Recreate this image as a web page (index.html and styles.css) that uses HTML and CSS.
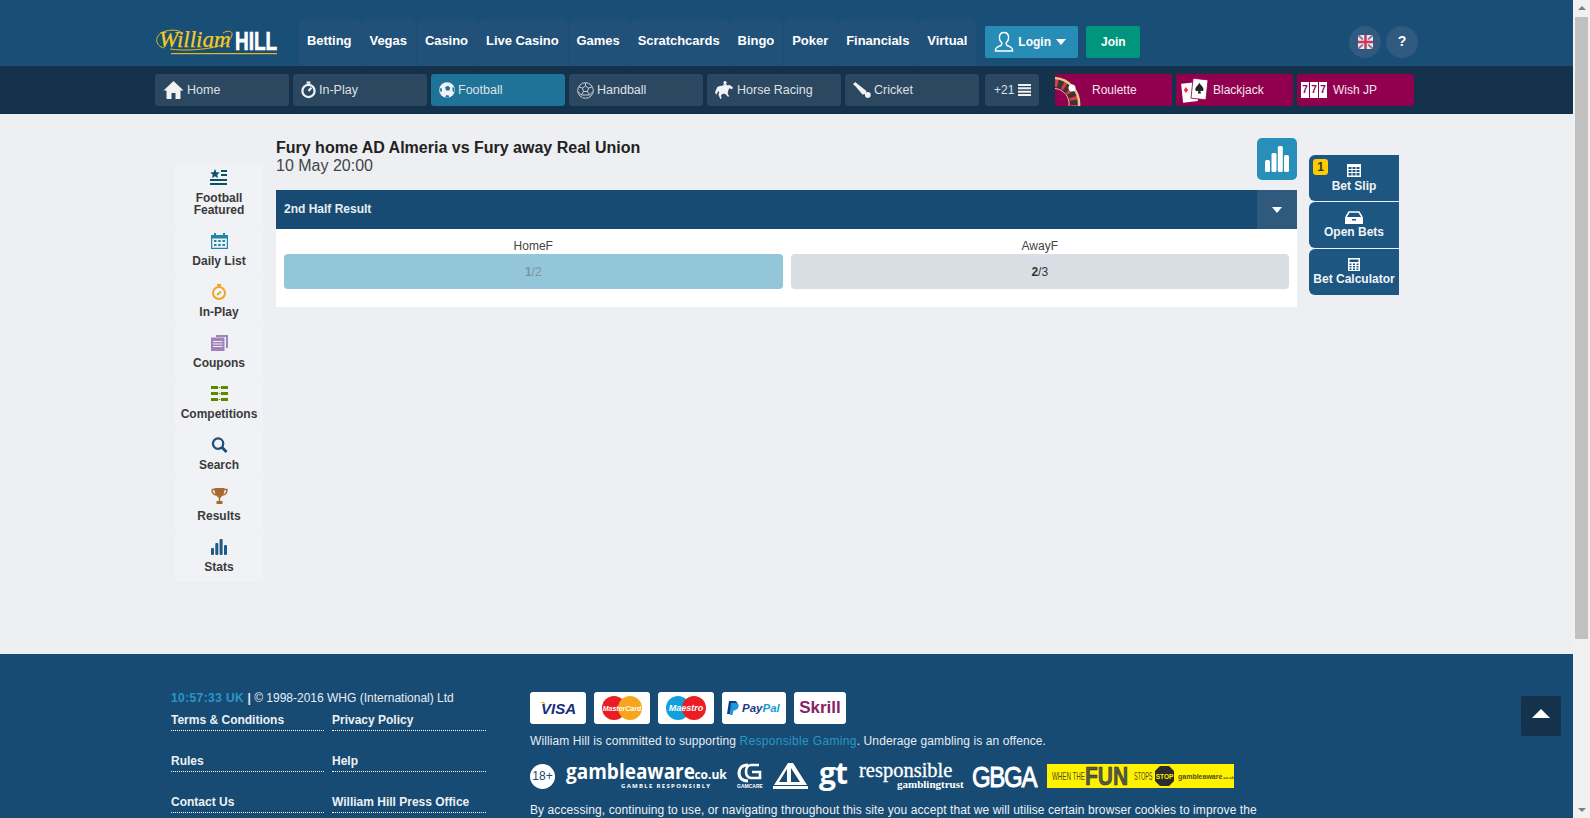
FILE: index.html
```html
<!DOCTYPE html>
<html lang="en">
<head>
    <meta charset="UTF-8">
    <meta name="viewport" content="width=device-width, initial-scale=1.0">
    <title>William Hill - Fury home AD Almeria vs Fury away Real Union</title>
    <link rel="stylesheet" href="styles.css">
</head>
<body>
<div class="window">
<div class="page">

    <!-- top header -->
    <header class="header">
        <div class="wrap header-row">
            <svg class="logo" width="122" height="26" viewBox="0 0 122 26">
                <path d="M9 19C0 17-1 7 8 3c8-3 14-2 18 0M68 4c5-3 10-2 9 2-1 5-6 9-13 11-14 4-36 5-49 3" fill="none" stroke="#e8bb1c" stroke-width="1"/>
                <text x="4" y="18" font-family="Liberation Serif" font-style="italic" font-size="23" fill="#f5cb1f" stroke="#f5cb1f" stroke-width=".25">William</text>
                <text transform="translate(80 21) scale(1 1.4)" font-family="Liberation Sans" font-weight="bold" font-size="19" fill="#fff" stroke="#fff" stroke-width=".5">HILL</text>
                <rect x="16" y="24" width="106" height="1.2" fill="#e8bb1c"/>
            </svg>
            <nav class="main-nav">
                <a class="tab">Betting</a>
                <a class="tab">Vegas</a>
                <a class="tab">Casino</a>
                <a class="tab">Live Casino</a>
                <a class="tab">Games</a>
                <a class="tab">Scratchcards</a>
                <a class="tab">Bingo</a>
                <a class="tab">Poker</a>
                <a class="tab">Financials</a>
                <a class="tab">Virtual</a>
            </nav>
            <a class="btn-login">
                <svg width="22" height="22" viewBox="0 0 22 22" fill="none" stroke="#fff" stroke-width="1.4"><path d="M11 1.500c-3 0-4.600 2.200-4.600 5 0 2.200 1 4 2.200 5 .4.400.3 2.200-.6 2.800-1.500 1-5.500 1.700-5.500 4.200v1.500h17v-1.500c0-2.500-4-3.200-5.500-4.200-.9-.6-1-2.400-.6-2.800 1.200-1 2.200-2.800 2.200-5 0-2.800-1.600-5-4.600-5z"/></svg>
                <span>Login</span>
                <i class="caret"></i>
            </a>
            <a class="btn-join">Join</a>
            <div class="round-btns">
                <a class="round">
                    <svg width="15" height="14" viewBox="0 0 15 14">
                        <rect width="15" height="14" fill="#e9e9f0"/>
                        <path d="M0 0l15 14M15 0L0 14" stroke="#8d6d98" stroke-width="2"/>
                        <path d="M7.500 0v14M0 7h15" stroke="#e9e9f0" stroke-width="4.500"/>
                        <path d="M7.500 0v14M0 7h15" stroke="#c93a55" stroke-width="2.500"/>
                    </svg>
                </a>
                <a class="round help">?</a>
            </div>
        </div>
    </header>

    <!-- sports bar -->
    <div class="subnav">
        <div class="wrap subnav-row">
            <a class="sport">
                <svg width="21" height="18" viewBox="0 0 20 18" fill="#f0f2f4"><path d="M10 0L0 9.500h3V18h5v-6h4v6h5V9.500h3z"/></svg>
                Home
            </a>
            <a class="sport">
                <svg width="15" height="18" viewBox="0 0 16 18" fill="none" stroke="#f0f2f4" stroke-width="2.400"><circle cx="8" cy="10" r="6.500"/><path d="M6 1.200h4M8 10l3-3.500"/></svg>
                In-Play
            </a>
            <a class="sport active">
                <svg width="16" height="18" viewBox="0 0 17 18"><circle cx="8.500" cy="9" r="8.300" fill="#f0f2f4"/><path d="M6.500 6l3-1.500 2.500 2-1 3H7.500zM.6 8l1.900-1.500.7 3-1 2.500zM7.500 14.500h2.500l1 2.500H6.500zM14 6l2 .5.400 4-1.600.5z" fill="#1f7399"/></svg>
                Football
            </a>
            <a class="sport">
                <svg width="17" height="17" viewBox="0 0 17 17" fill="none" stroke="#c9d0d7" stroke-width="1"><circle cx="8.500" cy="8.500" r="7.800"/><path d="M5.500 6l3-2 3 2-1 3.500h-4zM5.500 6L2 5M11.500 6L15 5M8.500 4V1M6.500 9.500L4.500 13M10.500 9.500l2 3.500M4.500 13h8M1 9.500l3.500 3.500M16 9.500L12.500 13"/></svg>
                Handball
            </a>
            <a class="sport">
                <svg width="19" height="19" viewBox="0 0 18 18" fill="#f0f2f4"><circle cx="9.500" cy="1.500" r="1.500"/><path d="M8 3h3l1 1.500 1.500-1 3.500 2.500-.8 1.800-2.700-1-1 2.500-.5 2.700 1.500 2.500-1.200.5-2.800-3-2 0-1.800 1.500.5 3-1.200.5L3.300 13l.7-2-.8-1.500L1.200 13 0 11l2-5c1.500-1.500 4-1.500 5.500-1.500z"/></svg>
                Horse Racing
            </a>
            <a class="sport">
                <svg width="18" height="18" viewBox="0 0 20 18" fill="#f0f2f4"><path d="M0 2.500L2.500 0l3 2.500 9.500 7.500-1 3.500-3.500.5L3 5z"/><circle cx="16.500" cy="14.500" r="3.200"/></svg>
                Cricket
            </a>
            <a class="sport more">
                +21
                <svg width="13" height="12" viewBox="0 0 13 12" fill="#f0f2f4"><path d="M0 0h13v2H0zM0 3.300h13v2H0zM0 6.700h13v2H0zM0 10h13v2H0z"/></svg>
            </a>
            <div class="games">
                <a class="game">
                    <svg class="game-pic" width="27" height="32" viewBox="0 0 27 32" fill="none">
                        <path d="M0 9A21 21 0 0 1 19 32" stroke="#3b3335" stroke-width="8"/>
                        <path d="M0 9A21 21 0 0 1 19 32" stroke="#d8404a" stroke-width="8" stroke-dasharray="3 5"/>
                        <path d="M0 4A26 26 0 0 1 24 32" stroke="#e8c988" stroke-width="2.500"/>
                        <path d="M0 14.500A15.500 15.500 0 0 1 14 32" stroke="#e8c988" stroke-width="1"/>
                        <circle cx="17" cy="14" r="3.500" fill="#fff"/>
                    </svg>
                    <span class="roulette-label">Roulette</span>
                </a>
                <a class="game">
                    <svg class="cards" width="28" height="26" viewBox="0 0 28 26">
                        <rect x="1" y="6" width="15" height="19" fill="#fff" transform="rotate(-6 8 15)"/>
                        <path d="M5 10l2.200 3-2.200 3-2.200-3z" fill="#e33"/>
                        <rect x="11" y="2" width="15" height="20" fill="#fff" transform="rotate(6 18 12)" stroke="#90004e" stroke-width=".8"/>
                        <path d="M18.500 6c1.500 2.500 4 4 4 6.500 0 1.500-2 2.200-3.200 1l.7 3h-3.200l.7-3c-1.200 1.200-3.200.5-3.200-1 0-2.500 2.700-4 4-6.500z" fill="#222"/>
                    </svg>
                    Blackjack
                </a>
                <a class="game">
                    <span class="sevens"><b>7</b><b>7</b><b>7</b></span>
                    Wish JP
                </a>
            </div>
        </div>
    </div>

    <!-- event page -->
    <div class="content">
        <div class="wrap content-row">
            <ul class="side-nav">
                <li class="side-item first">
                    <svg width="18" height="16" viewBox="0 0 18 16" fill="#0e5068"><path d="M5 0l1.400 3.200 3.400.3-2.600 2.200.8 3.300L5 7.300 2 9l.8-3.300L.2 3.500l3.400-.3zM11 1h6v2h-6zM11 5h6v2h-6zM0 10h17v2H0zM0 14h17v2H0z"/></svg>
                    <span>Football<br>Featured</span>
                </li>
                <li class="side-item">
                    <svg width="17" height="16" viewBox="0 0 17 16"><path d="M0 2h17v14H0z" fill="#2087a8"/><path d="M1.200 5.500h14.600v9.300H1.200z" fill="#edeff3"/><path d="M3 0h2v4H3zM12 0h2v4h-2zM3 7h2.500v2H3zM7.200 7h2.500v2H7.200zM11.500 7H14v2h-2.500zM3 11h2.500v2H3zM7.200 11h2.500v2H7.200zM11.500 11H14v2h-2.500z" fill="#2087a8"/></svg>
                    <span>Daily List</span>
                </li>
                <li class="side-item">
                    <svg width="16" height="16" viewBox="0 0 16 16" fill="none" stroke="#eba726" stroke-width="2"><circle cx="8" cy="9" r="6"/><path d="M6 1h4M6 11l4-3.500"/></svg>
                    <span>In-Play</span>
                </li>
                <li class="side-item">
                    <svg width="17" height="16" viewBox="0 0 17 16"><path d="M5 0h12v13h-2V2H5z" fill="#a083b8"/><path d="M0 2.500h13.500V16H0z" fill="#a083b8"/><path d="M2 6h9.500v1H2zM2 8.500h9.500v1H2zM2 11h9.500v1H2z" fill="#edeff3"/></svg>
                    <span>Coupons</span>
                </li>
                <li class="side-item">
                    <svg width="17" height="16" viewBox="0 0 17 16" fill="#5b8a00"><path d="M0 0h7v3H0zM0 6h7v3H0zM0 12h7v3H0zM10 0h7v3h-7zM10 6h7v3h-7zM10 12h7v3h-7zM7.800 1h1.500v1H7.800zM7.800 7h1.500v1H7.800zM7.800 13h1.500v1H7.800z"/></svg>
                    <span>Competitions</span>
                </li>
                <li class="side-item">
                    <svg width="17" height="17" viewBox="0 0 17 17" fill="none" stroke="#1b4d78"><circle cx="7" cy="7" r="5.500" stroke-width="2.400"/><path d="M11 11l5 5" stroke-width="3"/></svg>
                    <span>Search</span>
                </li>
                <li class="side-item">
                    <svg width="17" height="16" viewBox="0 0 17 16"><path d="M1 1.500h15c0 3.500-1.500 5-4 5.500M1 1.500c0 3.500 1.500 5 4 5.500" fill="none" stroke="#a9682d" stroke-width="1.400"/><path d="M3.500 0h10c0 5-1 7.500-3.500 9-.5.400-.8 1-.8 2v2H11.500v3h-6v-3h2.300v-2c0-1-.3-1.600-.8-2C4.500 7.500 3.500 5 3.500 0z" fill="#a9682d"/></svg>
                    <span>Results</span>
                </li>
                <li class="side-item last">
                    <svg width="16" height="16" viewBox="0 0 16 16" fill="#1f5a85"><rect x="0" y="9" width="3" height="7" rx="1"/><rect x="4.300" y="4" width="3" height="12" rx="1"/><rect x="8.600" y="0" width="3" height="16" rx="1"/><rect x="13" y="6" width="3" height="10" rx="1"/></svg>
                    <span>Stats</span>
                </li>
            </ul>

            <main class="event">
                <div class="event-head">
                    <div>
                        <h1 class="event-title">Fury home AD Almeria vs Fury away Real Union</h1>
                        <div class="event-date">10 May 20:00</div>
                    </div>
                    <a class="stats-btn">
                        <svg width="24" height="26" viewBox="0 0 24 26" fill="#fff"><rect x="0" y="14" width="5" height="12" rx="1.500"/><rect x="6.500" y="7" width="5" height="19" rx="1.500"/><rect x="12.800" y="0" width="5" height="26" rx="1.500"/><rect x="19" y="9" width="5" height="17" rx="1.500"/></svg>
                    </a>
                </div>
                <section class="market">
                    <div class="market-head">
                        <span class="market-name">2nd Half Result</span>
                        <a class="market-toggle"><i class="caret"></i></a>
                    </div>
                    <div class="market-body">
                        <div class="outcome">
                            <div class="outcome-name">HomeF</div>
                            <a class="odds selected"><b>1</b>/2</a>
                        </div>
                        <div class="outcome">
                            <div class="outcome-name">AwayF</div>
                            <a class="odds"><b>2</b>/3</a>
                        </div>
                    </div>
                </section>
            </main>

            <div class="bet-tabs">
                <a class="bet-tab">
                    <i class="badge">1</i>
                    <svg width="14" height="13" viewBox="0 0 14 13" fill="#fff"><path d="M0 0h14v13H0zM1.500 3v2h3V3zM5.500 3v2h3V3zM9.500 3v2h3V3zM1.500 6v2h3V6zM5.500 6v2h3V6zM9.500 6v2h3V6zM1.500 9v2.500h3V9zM5.500 9v2.500h3V9zM9.500 9v2.500h3V9z" fill-rule="evenodd"/></svg>
                    Bet Slip
                </a>
                <a class="bet-tab">
                    <svg width="18" height="13" viewBox="0 0 18 13" fill="none" stroke="#fff"><path d="M1 6l3-5h10l3 5" stroke-width="1.500"/><path d="M0 6h18v7H0z" fill="#fff" stroke="none"/><path d="M7 8h4v1.500H7z" fill="#1d5681" stroke="none"/></svg>
                    Open Bets
                </a>
                <a class="bet-tab">
                    <svg width="12" height="13" viewBox="0 0 12 13" fill="#fff"><path d="M0 0h12v13H0zM1.500 1.500v2.500h9V1.500zM1.500 5.500V7h2V5.500zM5 5.500V7h2V5.500zM8.500 5.500V7h2V5.500zM1.500 8V9.500h2V8zM5 8V9.500h2V8zM8.500 8V9.500h2V8zM1.500 10.500V12h2v-1.500zM5 10.500V12h2v-1.500zM8.500 10.500V12h2v-1.500z" fill-rule="evenodd"/></svg>
                    Bet Calculator
                </a>
            </div>
        </div>
    </div>

    <!-- footer -->
    <footer class="footer">
        <div class="wrap footer-row">
            <div class="foot-left">
                <div class="copyright"><span class="clock">10:57:33 UK</span> <b>|</b> © 1998-2016 WHG (International) Ltd</div>
                <div class="foot-links">
                    <a>Terms &amp; Conditions</a>
                    <a>Privacy Policy</a>
                    <a>Rules</a>
                    <a>Help</a>
                    <a>Contact Us</a>
                    <a>William Hill Press Office</a>
                </div>
            </div>
            <div class="foot-right">
                <div class="pay-row">
                    <span class="pay">
                        <svg width="40" height="16" viewBox="0 0 40 16"><path d="M0 2c3 0 6 1 8 4L6 2z" fill="#f2a91e"/><text x="3" y="14" font-family="Liberation Sans" font-weight="bold" font-style="italic" font-size="15" fill="#1a2a80">VISA</text></svg>
                    </span>
                    <span class="pay">
                        <svg width="40" height="24" viewBox="0 0 40 24"><circle cx="12" cy="12" r="12" fill="#ea1c24"/><circle cx="28" cy="12" r="12" fill="#f7a51c"/><text x="20" y="14.500" text-anchor="middle" font-family="Liberation Sans" font-weight="bold" font-style="italic" font-size="7" fill="#fff">MasterCard</text></svg>
                    </span>
                    <span class="pay">
                        <svg width="40" height="24" viewBox="0 0 40 24"><circle cx="12" cy="12" r="12" fill="#129fdb"/><circle cx="28" cy="12" r="12" fill="#ea1c24"/><text x="20" y="15" text-anchor="middle" font-family="Liberation Sans" font-weight="bold" font-style="italic" font-size="9" fill="#fff">Maestro</text></svg>
                    </span>
                    <span class="pay wide">
                        <svg width="54" height="16" viewBox="0 0 54 16"><path d="M2 1h5c3 0 4 2 3 4.500S7 9 5 9H4l-1 5H0z" fill="#143a8a"/><path d="M4 3h5c2.500 0 3 2 2.500 4s-3 3.500-5 3.500l-1 4.500H3z" fill="#1b9ad6"/><text x="15" y="12" font-family="Liberation Sans" font-weight="bold" font-style="italic" font-size="11.500"><tspan fill="#1a3a86">Pay</tspan><tspan fill="#1b9ad6">Pal</tspan></text></svg>
                    </span>
                    <span class="pay narrow skrill">Skrill</span>
                </div>
                <p class="commit">William Hill is committed to supporting <a>Responsible Gaming</a>. Underage gambling is an offence.</p>
                <div class="trust-row">
                    <span class="age">18+</span>
                    <svg width="160" height="26" viewBox="0 0 160 26" fill="#fff" font-family="Open Sans" font-weight="bold">
                        <text transform="translate(0 16) scale(1 1.1)" font-size="19">gambleaware</text>
                        <text x="125" y="16" font-size="12">.co.uk</text>
                        <text x="55" y="25" font-size="6" letter-spacing="1.300">GAMBLE RESPONSIBLY</text>
                    </svg>
                    <svg width="25" height="26" viewBox="0 0 25 26" fill="none" stroke="#fff">
                        <path d="M11 2C5 2 2 5.500 2 10s3 8 9 8" stroke-width="3.200"/>
                        <path d="M22 2h-8c-3 0-5 3-5 7 0 3 2 6 5 6h9v-6h-8" stroke-width="2.600"/>
                        <text x="0" y="25" font-family="Liberation Sans" font-size="5" font-weight="bold" fill="#fff" stroke="none">GAMCARE</text>
                    </svg>
                    <svg width="35" height="26" viewBox="0 0 35 26" fill="#fff">
                        <path d="M15 0h5l14 22H1zM14 6L6 19h8zM18 5v14h9z" fill-rule="evenodd"/>
                        <rect y="23" width="35" height="3"/>
                    </svg>
                    <span class="gt">gt</span>
                    <svg width="102" height="26" viewBox="0 0 102 26" fill="#fff" font-family="Liberation Serif">
                        <text x="0" y="14" font-size="20.500" stroke="#fff" stroke-width=".3">responsible</text>
                        <text x="38" y="25" font-size="11" font-weight="bold">gamblingtrust</text>
                    </svg>
                    <svg width="64" height="26" viewBox="0 0 64 26" fill="#fff">
                        <text transform="translate(0 24) scale(1 1.25)" font-family="Liberation Sans" font-size="24" letter-spacing="-1.300" stroke="#fff" stroke-width=".8">GBGA</text>
                    </svg>
                    <svg class="fun" width="187" height="24" viewBox="0 0 187 24">
                        <rect width="187" height="24" fill="#fff200"/>
                        <g font-family="Liberation Sans" fill="#4d4d20">
                            <text transform="translate(5 16) scale(1 1.7)" font-size="6.200">WHEN THE</text>
                            <text transform="translate(38 21) scale(1 1.2)" font-size="21" font-weight="bold" fill="#58584a" stroke="#333" stroke-width=".5">FUN</text>
                            <text transform="translate(87 16) scale(1 1.9)" font-size="5.500">STOPS</text>
                        </g>
                        <path d="M113 2h9l5 5v10l-5 5h-9l-5-5V7z" fill="#2b2b2b"/>
                        <text x="117.500" y="14.500" text-anchor="middle" font-family="Liberation Sans" font-weight="bold" font-size="6.500" fill="#fff200">STOP</text>
                        <text x="131" y="15" font-family="Liberation Sans" font-weight="bold" font-size="7" fill="#4d4d20">gambleaware<tspan font-size="4">.co.uk</tspan></text>
                    </svg>
                </div>
                <p class="cookies">By accessing, continuing to use, or navigating throughout this site you accept that we will utilise certain browser cookies to improve the experience which you receive with us. William Hill brands use some cookies which interfere with your browser and what cookies which will</p>
            </div>
        </div>
    </footer>

    <a class="to-top"><i></i></a>
</div>

<!-- the page is longer than the window -->
<div class="scrollbar">
    <i class="arrow-up"></i>
    <div class="thumb"></div>
    <i class="arrow-down"></i>
</div>
</div>
</body>
</html>
```

FILE: styles.css
```css
* {
 box-sizing: border-box;
}

body {
 margin: 0;
 font-family: "Liberation Sans", Arial, sans-serif;
 font-size: 12px;
 color: #333;
 background-color: #edeff3;
}

a {
 color: inherit;
 text-decoration: none;
}

.window {
 display: flex;
 height: 818px;
 overflow: hidden;
}

.page {
 position: relative;
 flex: 1;
 min-width: 0;
 height: 818px;
 overflow: hidden;
}

.wrap {
 width: 1263px;
 margin: 0 auto;
}

/* header */
.header {
 height: 66px;
 background-color: #194e76;
}

.header-row {
 display: flex;
 align-items: flex-end;
 height: 66px;
}

.logo {
 flex: none;
 margin-bottom: 11px;
 overflow: visible;
}

.main-nav {
 display: flex;
 margin-left: 21px;
}

.tab {
 height: 47px;
 padding: 0 9px;
 border-radius: 6px 6px 0 0;
 background-color: #215179;
 box-shadow: inset 1px 0 0 #1c4f77;
 color: #fff;
 font-size: 13px;
 font-weight: bold;
 letter-spacing: -.04px;
 line-height: 44px;
}

.btn-login,
.btn-join {
 display: flex;
 align-items: center;
 height: 32px;
 margin: 0 0 8px 8px;
 border-radius: 2px;
 color: #fff;
 font-size: 12px;
 font-weight: bold;
}

.btn-login {
 width: 93px;
 margin-left: 9px;
 padding-left: 8px;
 background-color: #278db6;
}

.btn-login span {
 margin-left: 3px;
}

.btn-login .caret {
 margin-left: 5px;
}

.btn-join {
 justify-content: center;
 width: 54px;
 background-color: #00957d;
}

.caret {
 display: inline-block;
 width: 0;
 height: 0;
 border-left: 5px solid transparent;
 border-right: 5px solid transparent;
 border-top: 6px solid #fff;
}

.round-btns {
 display: flex;
 gap: 5px;
 margin: 0 0 8px auto;
}

.round {
 display: flex;
 align-items: center;
 justify-content: center;
 width: 32px;
 height: 32px;
 border-radius: 50%;
 background-color: #305a7f;
}

.help {
 color: #fff;
 font-size: 14px;
 font-weight: bold;
 padding-bottom: 3px;
}

/* sports bar */
.subnav {
 height: 48px;
 padding-top: 8px;
 background-color: #14324c;
}

.subnav-row {
 display: flex;
 gap: 4px;
}

.sport {
 display: flex;
 align-items: center;
 gap: 3px;
 width: 134px;
 height: 32px;
 padding-left: 8px;
 border-radius: 3px;
 background-color: #2c4760;
 color: #dde1e6;
 font-size: 12.5px;
}

.sport.active {
 background-color: #1f7399;
}

.sport.more {
 gap: 4px;
 width: 54px;
 margin-left: 2px;
 padding-left: 9px;
 font-size: 12px;
}

.games {
 display: flex;
 gap: 4px;
 margin-left: 12px;
}

.game {
 position: relative;
 display: flex;
 align-items: center;
 gap: 4px;
 width: 117px;
 height: 32px;
 padding-left: 5px;
 border-radius: 3px;
 background-color: #90004e;
 color: #f4e6ee;
 font-size: 12px;
 overflow: hidden;
}

.game-pic {
 position: absolute;
 left: 0;
 top: 0;
}

.roulette-label {
 margin-left: 32px;
}

.sevens {
 display: flex;
 gap: 1px;
 margin-left: -1px;
 margin-right: 2px;
}

.sevens b {
 width: 8px;
 height: 16px;
 background-color: #fff;
 color: #90004e;
 font-size: 10px;
 line-height: 16px;
 text-align: center;
}

/* content */
.content {
 height: 540px;
}

.content-row {
 display: flex;
 align-items: flex-start;
}

.side-nav {
 width: 88px;
 margin: 49px 0 0 20px;
 padding: 0;
 list-style: none;
}

.side-item {
 display: flex;
 flex-direction: column;
 align-items: center;
 height: 51px;
 padding-top: 8px;
 border-bottom: 1px solid #edeff3;
 background-color: #f0f2f5;
 color: #3a3a3a;
 font-size: 12px;
 font-weight: bold;
 line-height: 12px;
 text-align: center;
}

.side-item.first {
 height: 62px;
 padding-top: 6px;
}

.side-item.first svg {
 margin-bottom: 7px;
}

.side-item.last {
 border-bottom: 0;
}

.side-item svg {
 flex: none;
 height: 16px;
 margin-bottom: 6px;
}

.event {
 width: 1021px;
 margin: 24px 0 0 13px;
}

.event-head {
 display: flex;
 justify-content: space-between;
 height: 52px;
}

.event-title {
 margin: 0;
 color: #222;
 font-size: 16px;
 line-height: 19px;
}

.event-date {
 color: #444;
 font-size: 16px;
 line-height: 18px;
}

.stats-btn {
 display: flex;
 align-items: center;
 justify-content: center;
 width: 40px;
 height: 42px;
 border-radius: 5px;
 background-color: #278fb9;
}

.market {
 background-color: #fff;
}

.market-head {
 display: flex;
 align-items: center;
 justify-content: space-between;
 height: 39px;
 padding-left: 8px;
 background-color: #174b73;
 color: #e8edf2;
 font-weight: bold;
}

.market-name {
 padding-bottom: 2px;
}

.market-toggle {
 display: flex;
 align-items: center;
 justify-content: center;
 width: 40px;
 height: 39px;
 background-color: #2f5a7e;
}

.market-body {
 display: flex;
 gap: 8px;
 padding: 8px 8px 18px;
}

.outcome {
 flex: 1;
}

.outcome-name {
 padding-top: 1px;
 color: #444;
 line-height: 16px;
 text-align: center;
}

.odds {
 display: block;
 height: 35px;
 border-radius: 4px;
 background-color: #d9dee5;
 color: #333;
 line-height: 37px;
 text-align: center;
}

.odds.selected {
 background-color: #93c6d9;
 color: #81929c;
}

.bet-tabs {
 width: 90px;
 margin: 41px 0 0 12px;
}

.bet-tab {
 position: relative;
 display: flex;
 flex-direction: column;
 align-items: center;
 height: 46px;
 margin-bottom: 1px;
 padding-top: 9px;
 border-radius: 6px 0 0 6px;
 background-color: #1d5681;
 color: #f1f4f7;
 font-weight: bold;
 line-height: 15px;
}

.bet-tab svg {
 margin-bottom: 2px;
}

.bet-tab + .bet-tab svg {
 margin-bottom: 1px;
}

.badge {
 position: absolute;
 left: 4px;
 top: 4px;
 width: 15px;
 height: 16px;
 border-radius: 3px;
 background-color: #fc0;
 color: #333;
 font-style: normal;
 line-height: 16px;
 text-align: center;
}

/* footer */
.footer {
 height: 300px;
 background-color: #174b73;
 color: #fff;
}

.footer-row {
 display: flex;
}

.foot-left {
 width: 375px;
 padding: 37px 0 0 16px;
}

.copyright {
 line-height: 14px;
 color: #e8edf2;
}

.clock {
 color: #2b96c4;
 font-weight: bold;
 letter-spacing: .4px;
}

.foot-links {
 display: grid;
 grid-template-columns: 153px 154px;
 column-gap: 8px;
 row-gap: 22px;
 margin-top: 7px;
}

.foot-links a {
 height: 19px;
 border-bottom: 1px dotted #fff;
 color: #eef1f4;
 font-weight: bold;
 line-height: 17px;
}

.foot-right {
 width: 730px;
 padding-top: 38px;
}

.pay-row {
 display: flex;
 gap: 8px;
}

.pay {
 display: flex;
 align-items: center;
 justify-content: center;
 width: 56px;
 height: 32px;
 border-radius: 3px;
 background-color: #fff;
}

.pay.wide {
 width: 64px;
}

.pay.narrow {
 width: 52px;
}

.skrill {
 color: #862165;
 font-size: 17px;
 font-weight: bold;
}

.commit {
 margin: 10px 0 0;
 color: #e8edf2;
 letter-spacing: .1px;
 line-height: 14px;
}

.commit a {
 color: #2b96c4;
 letter-spacing: .33px;
}

.trust-row {
 display: flex;
 align-items: center;
 gap: 11px;
 height: 26px;
 margin-top: 15px;
}

.trust-row svg {
 flex: none;
 overflow: visible;
}

.age {
 flex: none;
 width: 25px;
 height: 25px;
 border-radius: 50%;
 background-color: #fff;
 color: #174b73;
 font-size: 12px;
 line-height: 25px;
 text-align: center;
}

.gt {
 flex: none;
 width: 29px;
 height: 26px;
 margin-top: -6px;
 color: #fff;
 font-family: "Open Sans", sans-serif;
 font-size: 30px;
 font-weight: bold;
 letter-spacing: -1px;
 line-height: 26px;
}

.cookies {
 width: 730px;
 margin: 14px 0 0;
 color: #eef1f4;
 letter-spacing: .09px;
 line-height: 14px;
}

.to-top {
 position: absolute;
 left: 1521px;
 top: 696px;
 display: flex;
 align-items: center;
 justify-content: center;
 width: 40px;
 height: 40px;
 border-radius: 2px;
 background-color: #14324c;
}

.to-top i {
 width: 0;
 height: 0;
 margin-bottom: 5px;
 border-left: 9px solid transparent;
 border-right: 9px solid transparent;
 border-bottom: 9px solid #fff;
}

/* scrollbar, drawn because the footer runs on below the window */
.scrollbar {
 display: flex;
 flex: none;
 flex-direction: column;
 align-items: center;
 width: 17px;
 height: 818px;
 background-color: #f1f1f1;
}

.arrow-up,
.arrow-down {
 flex: none;
 width: 0;
 height: 0;
 border-left: 4px solid transparent;
 border-right: 4px solid transparent;
}

.arrow-up {
 margin: 6px 0 7px;
 border-bottom: 4px solid #7f7f7f;
}

.arrow-down {
 margin: auto 0 6px;
 border-top: 4px solid #7f7f7f;
}

.thumb {
 flex: none;
 width: 13px;
 height: 622px;
 background-color: #c1c1c1;
}
```
